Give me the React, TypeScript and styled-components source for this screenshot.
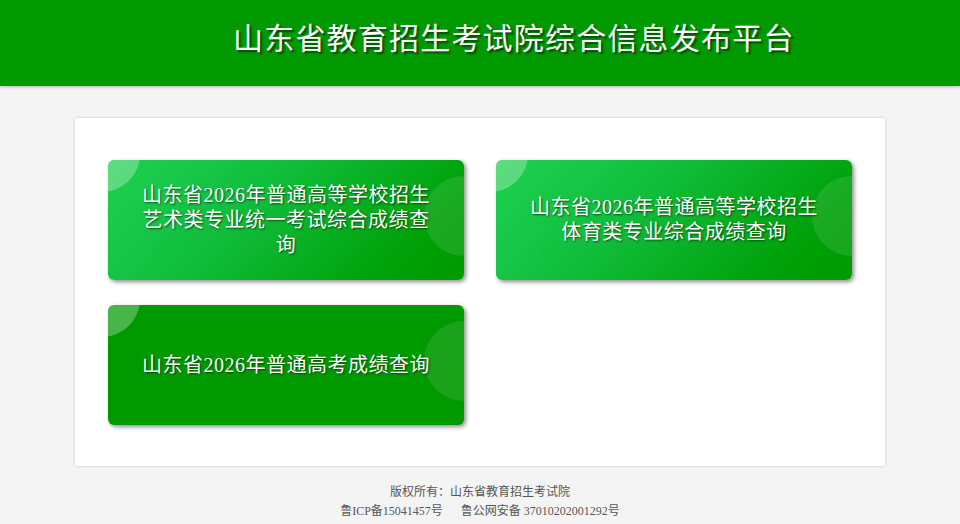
import styled, { createGlobalStyle } from 'styled-components'

const GlobalStyle = createGlobalStyle`
  html, body {
    margin: 0;
    padding: 0;
    background: #f4f4f4;
  }
  * {
    box-sizing: border-box;
  }
`

const cards = [
  { title: '山东省2026年普通高等学校招生艺术类专业统一考试综合成绩查询', gradient: true },
  { title: '山东省2026年普通高等学校招生体育类专业综合成绩查询', gradient: true },
  { title: '山东省2026年普通高考成绩查询', gradient: false },
]

const App = () => {
  return (
    <>
      <GlobalStyle />
      <PageStyled>
        <HeaderStyled>
          <h1>山东省教育招生考试院综合信息发布平台</h1>
        </HeaderStyled>
        <PanelStyled>
          <CardGrid>
            {cards.map((card) => (
              <CardStyled key={card.title} $gradient={card.gradient}>
                <span>{card.title}</span>
              </CardStyled>
            ))}
          </CardGrid>
        </PanelStyled>
        <FooterStyled>
          <p>版权所有：山东省教育招生考试院</p>
          <p>
            <span>鲁ICP备15041457号</span>
            <span>鲁公网安备 37010202001292号</span>
          </p>
        </FooterStyled>
      </PageStyled>
    </>
  )
}

export default App

export const PageStyled = styled.div`
  width: 960px;
  min-height: 524px;
  background: #f4f4f4;
`

export const HeaderStyled = styled.div`
  height: 86px;
  background: #009900;
  box-shadow: 0 1px 3px rgba(0, 0, 0, 0.25);
  padding-left: 233px;
  h1 {
    margin: 0;
    padding-top: 16px;
    font-family: 'Noto Sans CJK SC', sans-serif;
    font-size: 30px;
    font-weight: 400;
    letter-spacing: 1.2px;
    line-height: 40px;
    color: #fff;
    text-shadow: 2px 2px 2px rgba(0, 0, 0, 0.55);
  }
`

export const PanelStyled = styled.div`
  width: 810px;
  margin: 32px auto 0;
  padding: 42px 33px 41px;
  background: #fff;
  box-shadow: 0 0 3px rgba(0, 0, 0, 0.18);
`

export const CardGrid = styled.div`
  display: grid;
  grid-template-columns: 356px 356px;
  column-gap: 32px;
  row-gap: 25px;
`

export const CardStyled = styled.div<{ $gradient: boolean }>`
  position: relative;
  overflow: hidden;
  height: 120px;
  border-radius: 6px;
  display: flex;
  align-items: center;
  justify-content: center;
  padding: 0 32px;
  background: ${(props) =>
    props.$gradient
      ? 'linear-gradient(135deg, #1fd04f 0%, #12c040 35%, #00a20a 80%, #009900 100%)'
      : '#009900'};
  box-shadow: 2px 2px 4px rgba(0, 0, 0, 0.45);
  span {
    position: relative;
    z-index: 1;
    text-align: center;
    font-family: 'Liberation Serif', 'Noto Sans CJK SC', serif;
    font-size: 20px;
    line-height: 25px;
    letter-spacing: 0.5px;
    color: #fff;
    text-shadow: 1px 1px 2px rgba(0, 0, 0, 0.6);
  }
  &::before {
    content: '';
    position: absolute;
    top: -44px;
    left: -44px;
    width: 76px;
    height: 76px;
    border-radius: 50%;
    background: rgba(255, 255, 255, 0.28);
  }
  &::after {
    content: '';
    position: absolute;
    top: 16px;
    right: -40px;
    width: 80px;
    height: 80px;
    border-radius: 50%;
    background: rgba(255, 255, 255, 0.1);
  }
`

export const FooterStyled = styled.div`
  padding-top: 17px;
  text-align: center;
  font-family: 'Liberation Serif', 'Noto Sans CJK SC', serif;
  font-size: 12px;
  color: #555;
  p {
    margin: 0;
    line-height: 19px;
  }
  span + span {
    margin-left: 18px;
  }
`
